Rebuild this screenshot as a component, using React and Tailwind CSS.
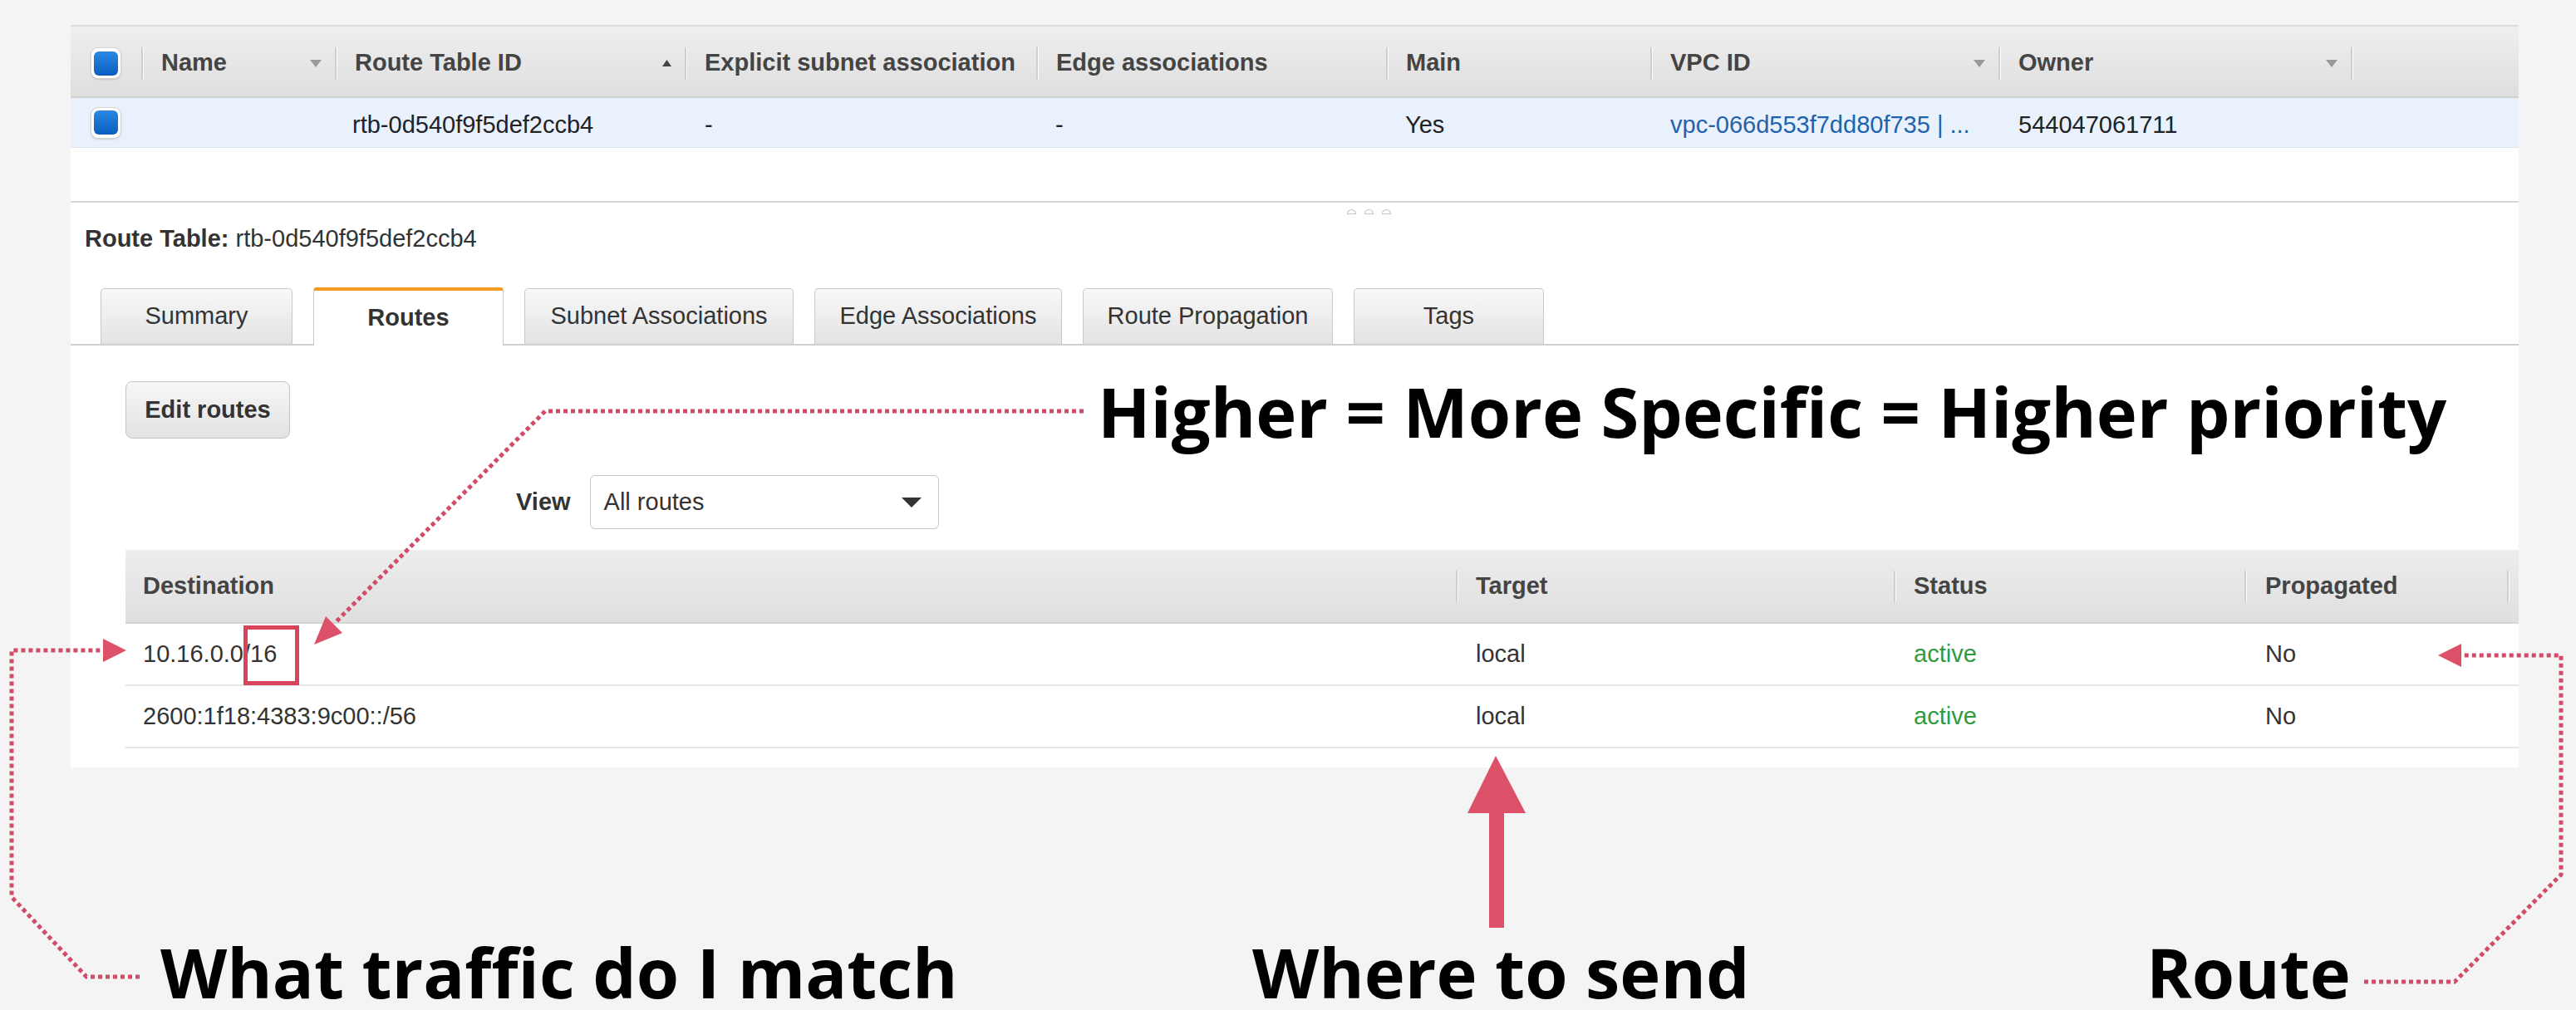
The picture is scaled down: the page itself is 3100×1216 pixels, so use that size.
import React from "react";

const topCols = [
  { label: "Name", w: "w-[233px]", arrow: "down" },
  { label: "Route Table ID", w: "w-[421px]", arrow: "up" },
  { label: "Explicit subnet association", w: "w-[423px]" },
  { label: "Edge associations", w: "w-[421px]" },
  { label: "Main", w: "w-[318px]" },
  { label: "VPC ID", w: "w-[419px]", arrow: "down" },
  { label: "Owner", w: "w-[424px]", arrow: "down" },
];

const routes = [
  { dest: "10.16.0.0/16", target: "local", status: "active", prop: "No" },
  { dest: "2600:1f18:4383:9c00::/56", target: "local", status: "active", prop: "No" },
];

const tabs = [
  { label: "Summary", w: "w-[231px]" },
  { label: "Routes", w: "w-[229px]", active: true },
  { label: "Subnet Associations", w: "w-[324px]" },
  { label: "Edge Associations", w: "w-[298px]" },
  { label: "Route Propagation", w: "w-[301px]" },
  { label: "Tags", w: "w-[229px]" },
];

function SortArrow({ up }) {
  if (up) {
    return (
      <svg width="11" height="8" viewBox="0 0 11 8" className="shrink-0">
        <path d="M0 8 L5.5 0 L11 8 Z" fill="#444" />
      </svg>
    );
  }
  return (
    <svg width="14" height="9" viewBox="0 0 14 9" className="shrink-0">
      <path d="M0 0 L14 0 L7 9 Z" fill="#9a9a9a" />
    </svg>
  );
}

function Check() {
  return (
    <div className="w-[37px] h-[38px] rounded-[9px] bg-white border border-[#d4d4d4] shadow-[0_1px_2px_rgba(0,0,0,0.15)] flex items-center justify-center">
      <div className="w-[29px] h-[29px] rounded-[6px] bg-linear-to-b from-[#2a88e2] to-[#0a5dbf]" />
    </div>
  );
}

function Sep({ h = "h-[39px]" }) {
  return <div className={`w-[3px] ${h} shrink-0 border-l-2 border-[#cfcfcf] border-r border-r-white`} />;
}

function Dotted() {
  return (
    <svg className="absolute inset-0 pointer-events-none" width="3100" height="1216" viewBox="0 0 3100 1216">
      <g fill="none" stroke="#d04c69" strokeWidth="5" strokeDasharray="5 4">
        <polyline points="1304,495 656,495 403,750" />
        <polyline points="168,1176 104,1176 14,1080 14,783 124,783" />
        <polyline points="2845,1182 2954,1182 3082,1053 3082,789 2963,789" />
      </g>
      <g fill="#dc5068">
        <polygon points="378,776 392,742 412,762" />
        <polygon points="152,783 124,769 124,797" />
        <polygon points="2934,789 2962,775 2962,803" />
        <polygon points="1800,910 1766,979 1836,979" />
        <rect x="1792" y="976" width="18" height="141" />
      </g>
      <rect x="295.5" y="755.5" width="62" height="67" fill="none" stroke="#d9435c" strokeWidth="5" />
    </svg>
  );
}

function Label({ children, pos }) {
  return (
    <div className={`absolute ${pos} font-['Open_Sans',sans-serif] font-bold text-[83px] leading-none text-black whitespace-nowrap`}>
      {children}
    </div>
  );
}

export default function App() {
  return (
    <div className="relative w-[3100px] h-[1216px] bg-[#f4f4f4] overflow-hidden">
      <div className="pt-[30px] pl-[85px]">
        <div className="w-[2946px] h-[894px] bg-white flex flex-col font-['Liberation_Sans',Arial,sans-serif] text-[29px] text-[#222]">
          {/* resource list */}
          <div className="border-t-2 border-[#dcdcdc]">
            <div className="h-[86px] pt-[4px] flex items-center bg-linear-to-b from-[#efefef] to-[#dedede] border-b-2 border-[#d0d0d0] font-bold text-[#444]">
              <div className="w-[85px] pl-[24px] flex items-center">
                <Check />
              </div>
              {topCols.map((c) => (
                <div key={c.label} className={`${c.w} flex items-center shrink-0`}>
                  <Sep />
                  <div className="flex-1 pl-[21px] whitespace-nowrap overflow-hidden">{c.label}</div>
                  {c.arrow && <div className="mr-[16px] ml-2">{<SortArrow up={c.arrow === "up"} />}</div>}
                </div>
              ))}
              <div className="flex-1 flex items-center">
                <Sep />
              </div>
            </div>
            <div className="h-[60px] pt-[6px] flex items-center bg-[#e8f1fc] border-b border-[#e0e6ee]">
              <div className="w-[85px] pl-[24px] flex items-center -mt-[6px]">
                <Check />
              </div>
              <div className="w-[233px]" />
              <div className="w-[421px] pl-[21px]">rtb-0d540f9f5def2ccb4</div>
              <div className="w-[423px] pl-[24px]">-</div>
              <div className="w-[421px] pl-[23px]">-</div>
              <div className="w-[318px] pl-[23px]">Yes</div>
              <div className="w-[419px] pl-[24px] text-[#1f63ad] whitespace-nowrap">vpc-066d553f7dd80f735 | ...</div>
              <div className="w-[424px] pl-[24px]">544047061711</div>
            </div>
          </div>
          <div className="h-[64px]" />

          {/* details pane */}
          <div className="relative border-t-2 border-[#d6d6d6] flex-1 flex flex-col">
            <div className="absolute top-[8px] left-[1536px] flex gap-[10px]">
              <div className="w-[11px] h-[6px] rounded-t-full border border-[#c4c4c4]" />
              <div className="w-[11px] h-[6px] rounded-t-full border border-[#c4c4c4]" />
              <div className="w-[11px] h-[6px] rounded-t-full border border-[#c4c4c4]" />
            </div>
            <div className="pt-[26px] pl-[17px] leading-[34px] text-[#333]">
              <span className="font-bold">Route Table:</span> rtb-0d540f9f5def2ccb4
            </div>

            <div className="mt-[43px] h-[69px] flex items-end gap-[25px] pl-[36px] border-b-2 border-[#cfcfcf]">
              {tabs.map((t) =>
                t.active ? (
                  <div
                    key={t.label}
                    className={`${t.w} h-[70px] -mb-[2px] relative bg-white border-x border-[#cacaca] border-t-4 border-t-[#f29d21] rounded-t-[4px] flex items-center justify-center font-bold text-[#333]`}
                  >
                    {t.label}
                  </div>
                ) : (
                  <div
                    key={t.label}
                    className={`${t.w} h-[67px] rounded-t-[5px] border border-b-0 border-[#c9c9c9] bg-linear-to-b from-[#f8f8f8] to-[#e3e3e3] flex items-center justify-center text-[#333]`}
                  >
                    {t.label}
                  </div>
                )
              )}
            </div>

            <div className="pl-[66px] flex flex-col">
              <div className="mt-[43px] w-[198px] h-[69px] rounded-[8px] border border-[#c4c4c4] bg-linear-to-b from-[#f7f7f7] to-[#e2e2e2] flex items-center justify-center font-bold text-[#333]">
                Edit routes
              </div>

              <div className="mt-[44px] ml-[470px] flex items-center gap-[23px]">
                <span className="font-bold text-[#333]">View</span>
                <div className="w-[420px] h-[65px] rounded-[6px] border border-[#c8c8c8] flex items-center justify-between pl-[16px] pr-[20px] text-[#333]">
                  <span>All routes</span>
                  <svg width="24" height="12" viewBox="0 0 24 12">
                    <path d="M0 0 L24 0 L12 12 Z" fill="#333" />
                  </svg>
                </div>
              </div>

              <div className="mt-[25px]">
                <div className="h-[89px] flex items-center bg-linear-to-b from-[#ededed] to-[#dfdfdf] border-b-2 border-[#d4d4d4] font-bold text-[#444]">
                  <div className="w-[1601px] pl-[21px]">Destination</div>
                  <div className="w-[527px] flex items-center">
                    <Sep h="h-[38px]" />
                    <span className="pl-[21px]">Target</span>
                  </div>
                  <div className="w-[422px] flex items-center">
                    <Sep h="h-[38px]" />
                    <span className="pl-[21px]">Status</span>
                  </div>
                  <div className="w-[316px] flex items-center">
                    <Sep h="h-[38px]" />
                    <span className="pl-[22px]">Propagated</span>
                  </div>
                  <div className="flex-1 flex items-center">
                    <Sep h="h-[38px]" />
                  </div>
                </div>
                {routes.map((r, i) => (
                  <div key={r.dest} className={`${i === 0 ? "h-[75px]" : "h-[75px]"} flex items-center border-b-2 border-[#e6e6e6] text-[#333]`}>
                    <div className="w-[1601px] pl-[21px]">{r.dest}</div>
                    <div className="w-[527px] pl-[24px]">{r.target}</div>
                    <div className="w-[422px] pl-[24px] text-[#2f9b3f]">{r.status}</div>
                    <div className="w-[316px] pl-[25px]">{r.prop}</div>
                  </div>
                ))}
              </div>
            </div>
          </div>
        </div>
      </div>

      <Dotted />
      <Label pos="left-[1321px] top-[453px]">Higher = More Specific = Higher priority</Label>
      <Label pos="left-[193px] top-[1128px]">What traffic do I match</Label>
      <Label pos="left-[1507px] top-[1128px]">Where to send</Label>
      <Label pos="left-[2583px] top-[1128px]">Route</Label>
    </div>
  );
}
